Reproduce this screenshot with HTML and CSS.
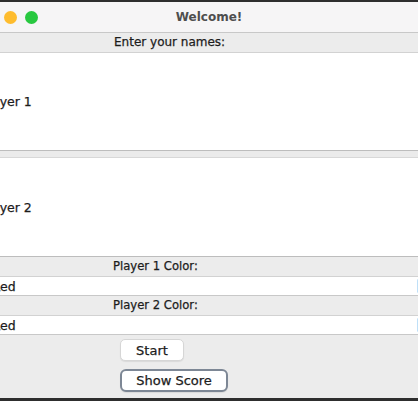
FILE: index.html
```html
<!DOCTYPE html>
<html>
<head>
<meta charset="utf-8">
<link rel="stylesheet" href="styles.css">
</head>
<body>
<div class="screen">
  <div class="window">
    <div class="titlebar">
      <div class="lights">
        <span class="light red"></span>
        <span class="light yellow"></span>
        <span class="light green"></span>
      </div>
      <div class="title">Welcome!</div>
    </div>
    <div class="label-row">Enter your names:</div>
    <div class="field">Player 1</div>
    <div class="gap"></div>
    <div class="field field2">Player 2</div>
    <div class="label-row color-label">Player 1 Color:</div>
    <div class="combo"><span>Red</span><span class="arrow"></span></div>
    <div class="label-row color-label">Player 2 Color:</div>
    <div class="combo"><span>Red</span><span class="arrow"></span></div>
    <div class="buttons">
      <button class="btn start">Start</button>
      <button class="btn score">Show Score</button>
    </div>
  </div>
</div>
</body>
</html>
```

FILE: styles.css
```css
html, body {
  margin: 0;
  padding: 0;
  background: #3a3a3a;
  overflow: hidden;
}
.screen {
  width: 418px;
  height: 401px;
  overflow: hidden;
  background: #ececec;
  border-top: 2px solid #2e2e2e;
  border-bottom: 3px solid #2e2e2e;
  box-sizing: border-box;
}
.window {
  width: 466px;
  margin-left: -24px;
  font-family: "DejaVu Sans", "Open Sans", sans-serif;
  color: #1c1c1c;
  font-size: 11.5px;
  -webkit-text-stroke: 0.25px #1c1c1c;
  display: flex;
  flex-direction: column;
}
.titlebar {
  height: 30px;
  background: #f6f5f6;
  border-bottom: 1px solid #c8c8c8;
  display: flex;
  align-items: center;
  position: relative;
}
.lights {
  display: flex;
  gap: 8px;
  padding-left: 7px;
  padding-top: 1px;
}
.light {
  width: 13px;
  height: 13px;
  border-radius: 50%;
  display: block;
}
.red { background: #fe5f57; }
.yellow { background: #febc2e; }
.green { background: #28c840; }
.title {
  position: absolute;
  left: 0;
  right: 0;
  top: 8px;
  text-align: center;
  font-weight: bold;
  font-size: 12px;
  color: #4e4e4e;
  -webkit-text-stroke: 0;
}
.label-row {
  height: 19px;
  line-height: 19px;
  background: #ececec;
  padding-left: 138px;
  border-bottom: 1px solid #d2d2d2;
  font-size: 12px;
}
.color-label {
  padding-left: 137px;
  font-size: 11.6px;
}
.field {
  height: 97px;
  background: #fff;
  display: flex;
  align-items: center;
  padding-left: 5px;
  border-bottom: 1px solid #bdbdbd;
  font-size: 12.5px;
}
.field2 {
  height: 98px;
  border-top: 1px solid #d8d8d8;
}
.gap {
  height: 6px;
  background: #ebebeb;
}
.combo {
  height: 18px;
  background: #fff;
  border-bottom: 1px solid #c8c8c8;
  display: flex;
  align-items: center;
  padding-left: 16px;
  position: relative;
  font-size: 12.5px;
}
.arrow {
  position: absolute;
  left: 441px;
  top: 2px;
  width: 3px;
  height: 14px;
  background: #bfe0f8;
  border-radius: 2px;
}
.buttons {
  display: flex;
  flex-direction: column;
  align-items: flex-start;
  gap: 8px;
  padding: 4px 0 0 144px;
  height: 58px;
}
.btn {
  font-family: "DejaVu Sans", "Open Sans", sans-serif;
  font-size: 13px;
  color: #1c1c1c;
  -webkit-text-stroke: 0.25px #1c1c1c;
  background: #fff;
  border: 1px solid #d6d6d6;
  border-radius: 5px;
  padding: 0;
  box-shadow: 0 1px 1px rgba(0,0,0,0.08);
}
.start {
  width: 64px;
  height: 22px;
}
.score {
  width: 108px;
  height: 23px;
  border: 2px solid #7d8795;
  border-radius: 6px;
}
```
